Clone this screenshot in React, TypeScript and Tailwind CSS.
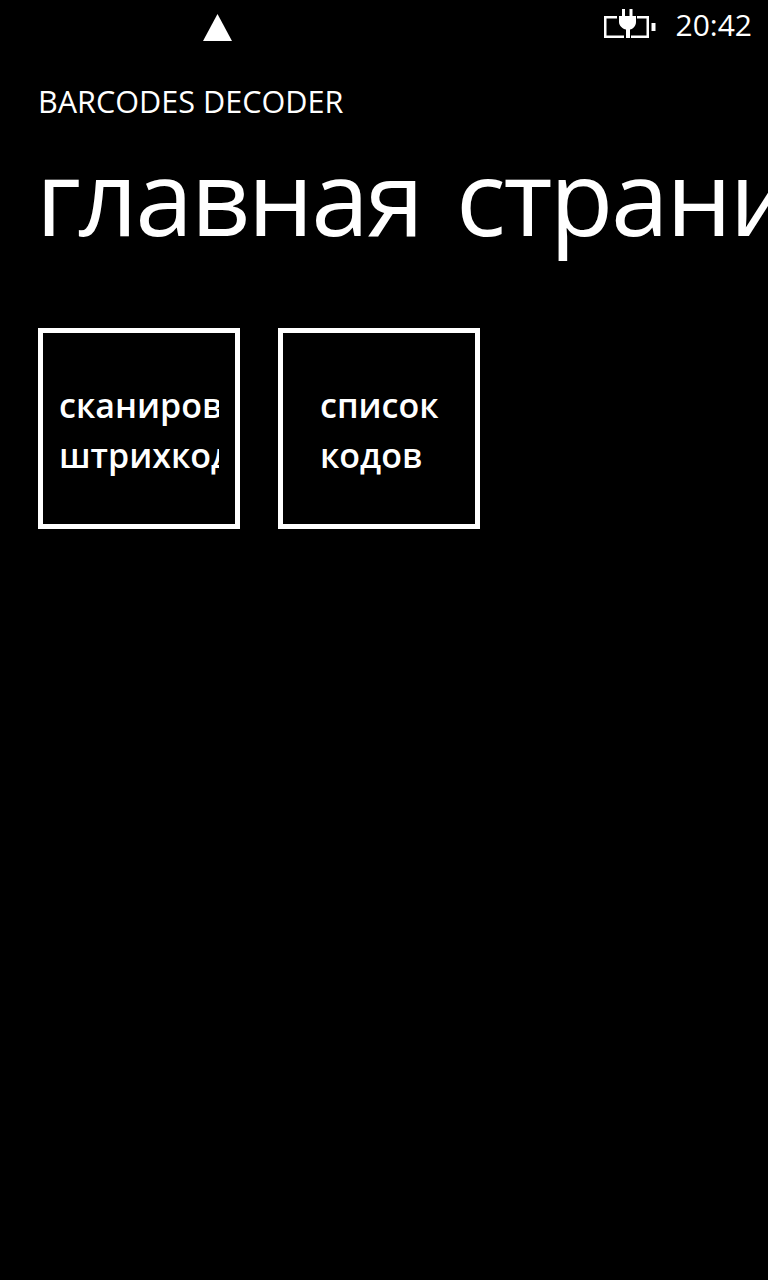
const font = "font-['Open_Sans','Noto_Sans',sans-serif]";

function Tile({ first, second, inset }: { first: string; second: string; inset: string }) {
  return (
    <div className="flex h-[201px] w-[202px] flex-col justify-center border-[5px] border-white pt-[3px]">
      <div className={`${inset} mr-[16px] overflow-hidden whitespace-nowrap text-[34px] leading-[50px] font-semibold`}>
        <div>{first}</div>
        <div>{second}</div>
      </div>
    </div>
  );
}

export default function App() {
  return (
    <div className={`${font} h-[1280px] w-[768px] overflow-hidden bg-black text-white`}>
      <div className="flex h-[50px] items-start">
        <svg className="mt-[14px] ml-[203px]" width="29" height="27" viewBox="0 0 29 27">
          <polygon points="14.5,0 29,27 0,27" fill="white" />
        </svg>
        <svg className="mt-[8px] ml-auto" width="52" height="32" viewBox="0 0 52 32" fill="none">
          <path d="M13 9.25H1.25V28.75H20M27 28.75H43.75V9.25H33" stroke="white" strokeWidth="2.5" />
          <path d="M47.5 15h4v8h-4z" fill="white" />
          <path d="M19.5 1v8M27 1v8" stroke="white" strokeWidth="3" />
          <path d="M15 8h17v6c0 4-3 7-6 7.5V30h-4v-8.5c-3-.5-7-3.5-7-7.5z" fill="white" />
        </svg>
        <div className="mt-[5px] mr-[16px] ml-[20px] text-[30px] leading-[40px]">20:42</div>
      </div>
      <div className="mt-[31px] ml-[38px] text-[30.6px] leading-[40px]">BARCODES DECODER</div>
      <div className="mt-[15px] ml-[36px] text-[104px] leading-[120px] font-normal tracking-[-2.5px] [word-spacing:10px] whitespace-nowrap">
        главная страница
      </div>
      <div className="mt-[72px] ml-[38px] flex gap-[38px]">
        <Tile first="сканировать" second="штрихкод" inset="ml-[16px]" />
        <Tile first="список" second="кодов" inset="ml-[37px]" />
      </div>
    </div>
  );
}
